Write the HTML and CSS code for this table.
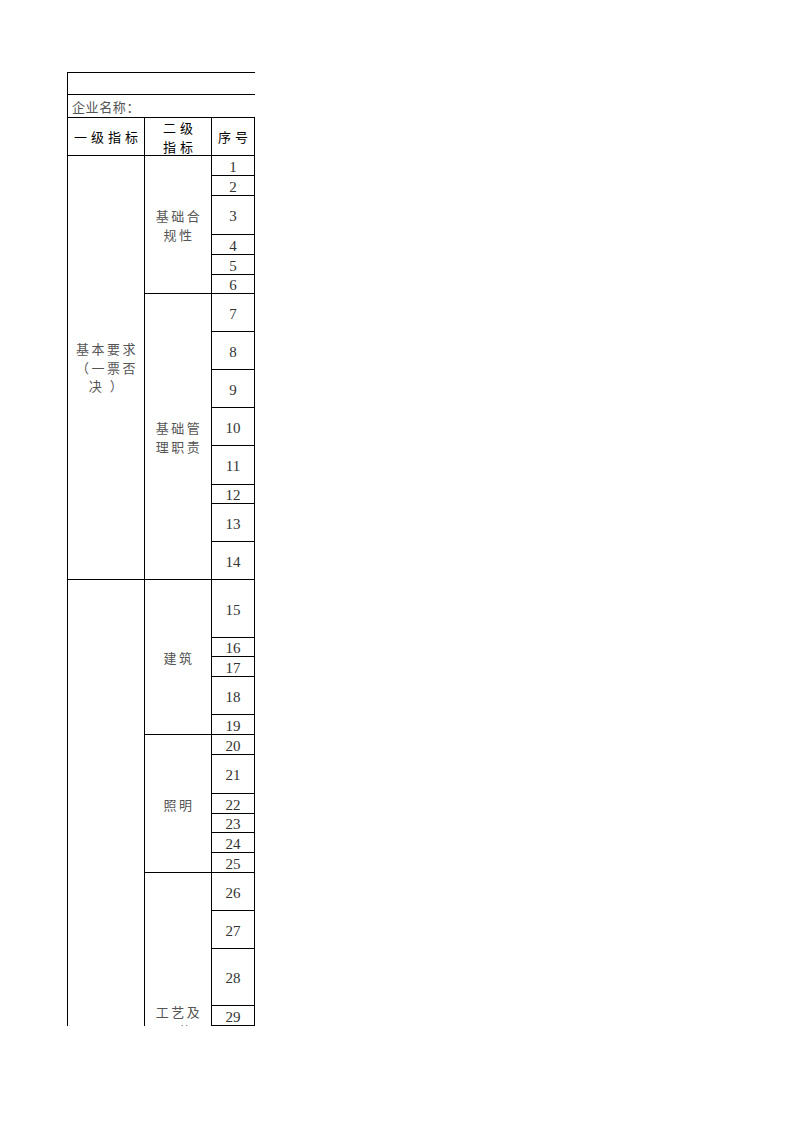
FILE: index.html
```html
<!DOCTYPE html>
<html lang="zh-CN">
<head>
<meta charset="utf-8">
<title>评价表</title>
<link rel="stylesheet" href="styles.css">
</head>
<body>
<div class="sheet">
  <div class="grid">
    <div class="cell full title"></div>
    <div class="cell full company">企业名称：</div>

    <div class="cell c1 head head-wide">一级指标</div>
    <div class="cell c2 head head-two">二级指标</div>
    <div class="cell c3 head">序号</div>

    <div class="cell c1 txt span-14">基本要求（一票否决 ）</div>
    <div class="cell c2 txt span-6">基础合规性</div>
    <div class="cell c3 num">1</div>
    <div class="cell c3 num">2</div>
    <div class="cell c3 num">3</div>
    <div class="cell c3 num">4</div>
    <div class="cell c3 num">5</div>
    <div class="cell c3 num">6</div>
    <div class="cell c2 txt span-8">基础管理职责</div>
    <div class="cell c3 num">7</div>
    <div class="cell c3 num">8</div>
    <div class="cell c3 num">9</div>
    <div class="cell c3 num">10</div>
    <div class="cell c3 num">11</div>
    <div class="cell c3 num">12</div>
    <div class="cell c3 num">13</div>
    <div class="cell c3 num">14</div>

    <div class="cell c1 txt span-rest"></div>
    <div class="cell c2 txt span-5">建筑</div>
    <div class="cell c3 num">15</div>
    <div class="cell c3 num">16</div>
    <div class="cell c3 num">17</div>
    <div class="cell c3 num">18</div>
    <div class="cell c3 num">19</div>
    <div class="cell c2 txt span-6">照明</div>
    <div class="cell c3 num">20</div>
    <div class="cell c3 num">21</div>
    <div class="cell c3 num">22</div>
    <div class="cell c3 num">23</div>
    <div class="cell c3 num">24</div>
    <div class="cell c3 num">25</div>
    <div class="cell c2 txt span-7">工艺及设施</div>
    <div class="cell c3 num">26</div>
    <div class="cell c3 num">27</div>
    <div class="cell c3 num">28</div>
    <div class="cell c3 num">29</div>
    <div class="cell c3 num"></div>
    <div class="cell c3 num"></div>
    <div class="cell c3 num"></div>
  </div>
</div>
</body>
</html>
```
FILE: styles.css
```css
html, body {
  margin: 0;
  padding: 0;
  background: #fff;
}

.sheet {
  margin: 72px 0 0 67px;
  width: 188px;
  height: 954px;
  overflow: hidden;
}

.grid {
  display: grid;
  width: 700px;
  grid-template-columns: 77px 67px 43px 1fr;
  grid-template-rows:
    22px 23px 38px
    20px 20px 39px 20px 20px 19px
    38px 38px 38px 38px 39px 19px 38px 38px
    58px 19px 20px 38px 20px
    20px 39px 20px 19px 20px 20px
    38px 38px 57px 20px
    38px 38px 66px;
  border-left: 1px solid #000;
  border-top: 1px solid #000;
  font-family: "Noto Sans CJK SC", "Noto Sans CJK JP", sans-serif;
  font-size: 13px;
  color: #555;
}

.cell {
  border-right: 1px solid #000;
  border-bottom: 1px solid #000;
  box-sizing: border-box;
  display: flex;
  align-items: center;
  justify-content: center;
  text-align: center;
  min-width: 0;
  min-height: 0;
}

.full {
  grid-column: 1 / -1;
}

.company {
  justify-content: flex-start;
  padding-left: 4px;
  padding-top: 1px;
  line-height: 1;
  letter-spacing: 0.6px;
}

.c1 { grid-column: 1; }
.c2 { grid-column: 2; }
.c3 { grid-column: 3; }

.span-5 { grid-row: span 5; }
.span-6 { grid-row: span 6; }
.span-7 { grid-row: span 7; }
.span-8 { grid-row: span 8; }
.span-14 { grid-row: span 14; }
.span-rest { grid-row: span 18; }

.head {
  color: #000;
  letter-spacing: 4px;
  line-height: 19px;
  padding: 0 4px 0 8px;
}

.head-wide {
  padding: 0 0 0 4px;
}

.head-two {
  padding: 0 12px 0 16px;
}

.c3.head {
  padding: 0 0 0 4px;
}

.txt {
  letter-spacing: 2.5px;
  line-height: 19px;
  padding: 1px 6px 0 8px;
}

.c1.txt {
  line-height: 18.5px;
  padding: 1px 4px 0 6px;
}

.num {
  font-family: "Liberation Serif", "Times New Roman", serif;
  font-size: 15px;
  line-height: 1;
  color: #333;
  padding-top: 3px;
}
```
